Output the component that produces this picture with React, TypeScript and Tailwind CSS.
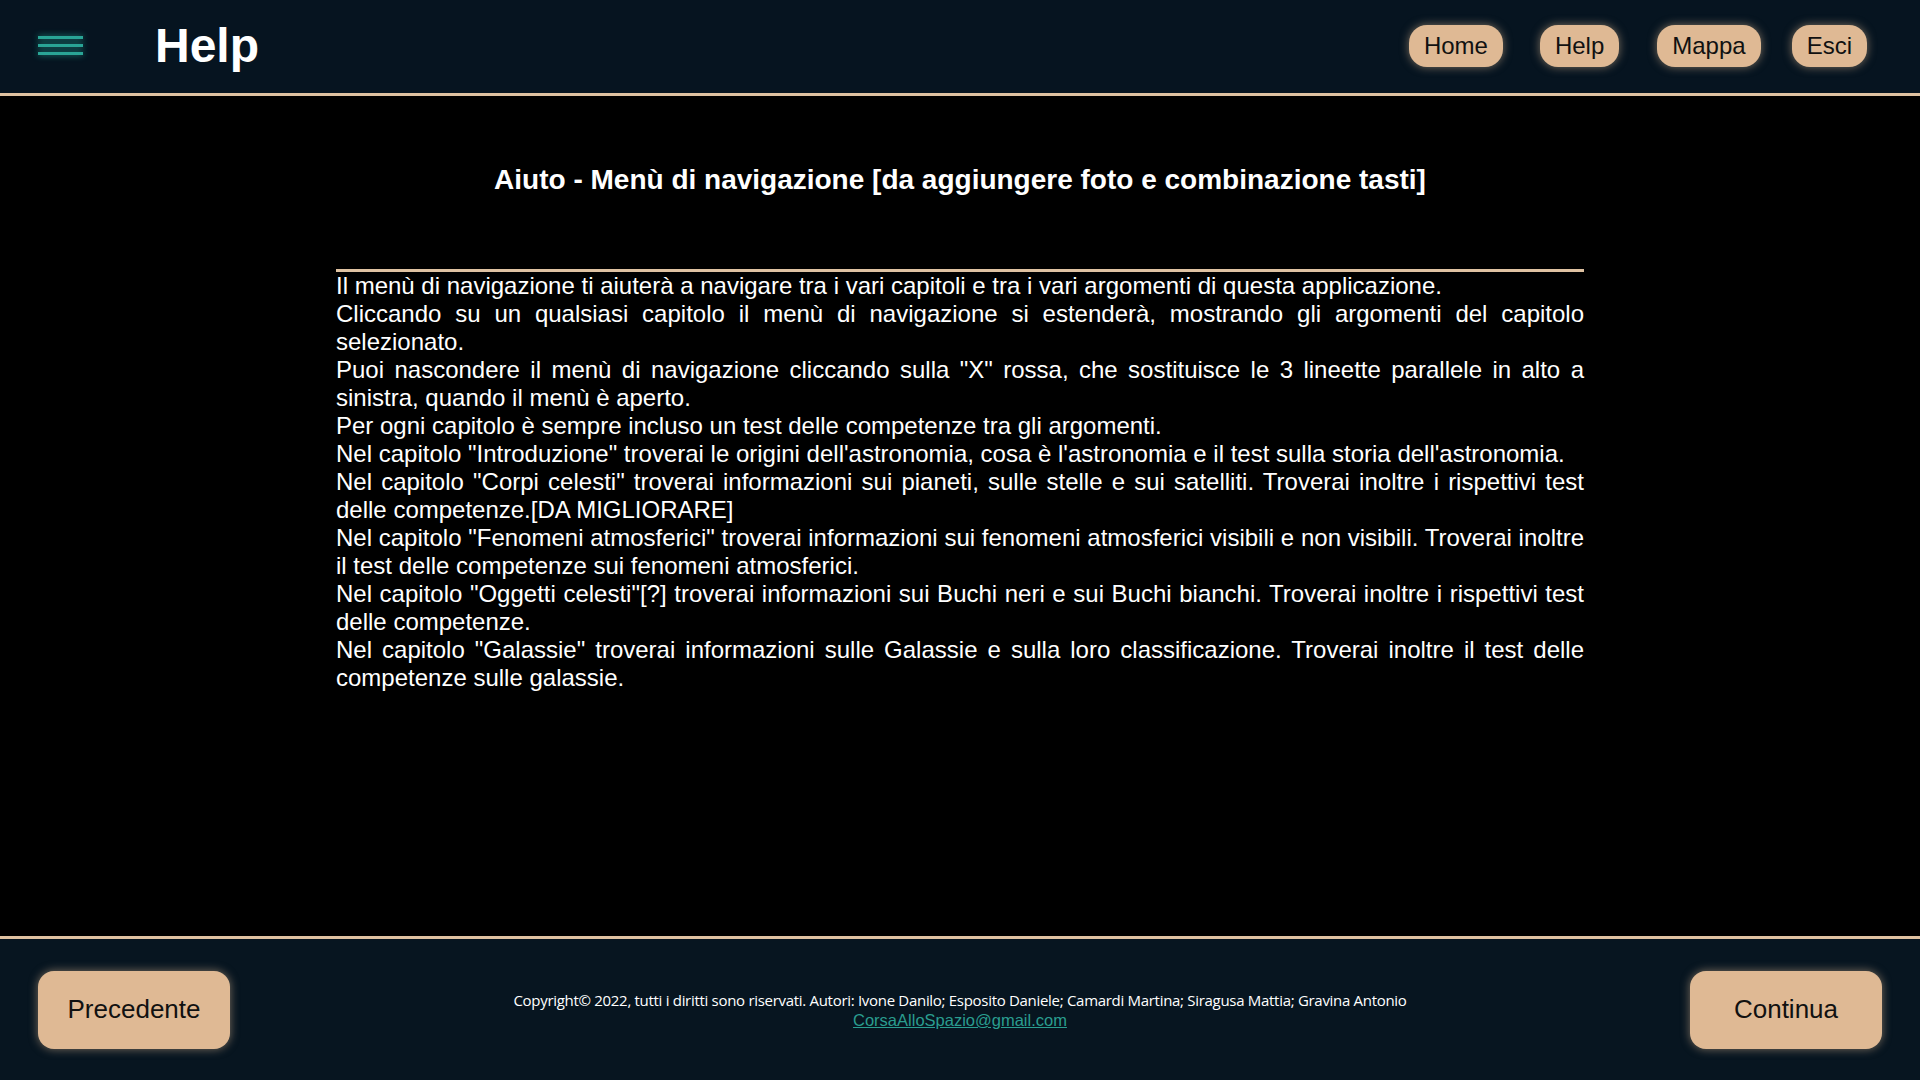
const navItems = [
  { label: "Home", gap: "ml-0" },
  { label: "Help", gap: "ml-[37px]" },
  { label: "Mappa", gap: "ml-[38px]" },
  { label: "Esci", gap: "ml-[31px]" },
];

const paragraphs = [
  "Il menù di navigazione ti aiuterà a navigare tra i vari capitoli e tra i vari argomenti di questa applicazione.",
  "Cliccando su un qualsiasi capitolo il menù di navigazione si estenderà, mostrando gli argomenti del capitolo selezionato.",
  'Puoi nascondere il menù di navigazione cliccando sulla "X" rossa, che sostituisce le 3 lineette parallele in alto a sinistra, quando il menù è aperto.',
  "Per ogni capitolo è sempre incluso un test delle competenze tra gli argomenti.",
  "Nel capitolo \"Introduzione\" troverai le origini dell'astronomia, cosa è l'astronomia e il test sulla storia dell'astronomia.",
  'Nel capitolo "Corpi celesti" troverai informazioni sui pianeti, sulle stelle e sui satelliti. Troverai inoltre i rispettivi test delle competenze.[DA MIGLIORARE]',
  'Nel capitolo "Fenomeni atmosferici" troverai informazioni sui fenomeni atmosferici visibili e non visibili. Troverai inoltre il test delle competenze sui fenomeni atmosferici.',
  'Nel capitolo "Oggetti celesti"[?] troverai informazioni sui Buchi neri e sui Buchi bianchi. Troverai inoltre i rispettivi test delle competenze.',
  'Nel capitolo "Galassie" troverai informazioni sulle Galassie e sulla loro classificazione. Troverai inoltre il test delle competenze sulle galassie.',
];

export default function App() {
  return (
    <div className="h-screen flex flex-col bg-black font-['Liberation_Sans',Arial,sans-serif]">
      {/* header */}
      <header className="h-[96px] shrink-0 bg-[#061420] border-b-[3px] border-[#dfc2a2] flex items-center pl-[38px] pr-[53px]">
        <button className="flex flex-col gap-[5px] w-[45px] mt-[-2px]">
          <span className="block h-[3px] w-full bg-[#2aa596] shadow-[0_0_6px_#1f8f82]" />
          <span className="block h-[3px] w-full bg-[#2aa596] shadow-[0_0_6px_#1f8f82]" />
          <span className="block h-[3px] w-full bg-[#2aa596] shadow-[0_0_6px_#1f8f82]" />
        </button>
        <h1 className="ml-[72px] text-[48px] font-bold text-white leading-none mt-[-2px]">Help</h1>
        <nav className="ml-auto flex items-center mt-[-1px]">
          {navItems.map((item) => (
            <button
              key={item.label}
              className={`${item.gap} h-[42px] px-[15px] rounded-[18px] bg-[#dfb994] text-[24px] text-[#111] shadow-[0_0_10px_rgba(223,185,148,0.55)]`}
            >
              {item.label}
            </button>
          ))}
        </nav>
      </header>

      {/* contenuto */}
      <main className="flex-1 flex flex-col items-center text-white">
        <h2 className="mt-[66px] text-[28px] font-bold leading-[36px]">
          Aiuto - Menù di navigazione [da aggiungere foto e combinazione tasti]
        </h2>
        <div className="w-[65%] mt-[71px] border-t-[3px] border-[#dfc2a2] text-[24px] leading-[28px] text-justify">
          {paragraphs.map((p, i) => (
            <p key={i}>{p}</p>
          ))}
        </div>
      </main>

      {/* footer */}
      <footer className="h-[144px] shrink-0 bg-[#071520] border-t-[3px] border-[#dfc2a2] flex items-center justify-between px-[38px]">
        <button className="w-[192px] h-[78px] rounded-[16px] bg-[#dfb994] text-[26px] text-[#111] shadow-[0_0_10px_rgba(223,185,148,0.55)]">
          Precedente
        </button>
        <div className="flex flex-col items-center mt-[2px]">
          <p className="text-white text-[15px] leading-[19px] tracking-[-0.3px] font-['Open_Sans',sans-serif]">
            Copyright© 2022, tutti i diritti sono riservati. Autori: Ivone Danilo; Esposito Daniele; Camardi Martina; Siragusa Mattia; Gravina Antonio
          </p>
          <a href="#" className="text-[#2a9d8f] text-[16.5px] leading-[20px] underline">
            CorsaAlloSpazio@gmail.com
          </a>
        </div>
        <button className="w-[192px] h-[78px] rounded-[16px] bg-[#dfb994] text-[26px] text-[#111] shadow-[0_0_10px_rgba(223,185,148,0.55)]">
          Continua
        </button>
      </footer>
    </div>
  );
}
